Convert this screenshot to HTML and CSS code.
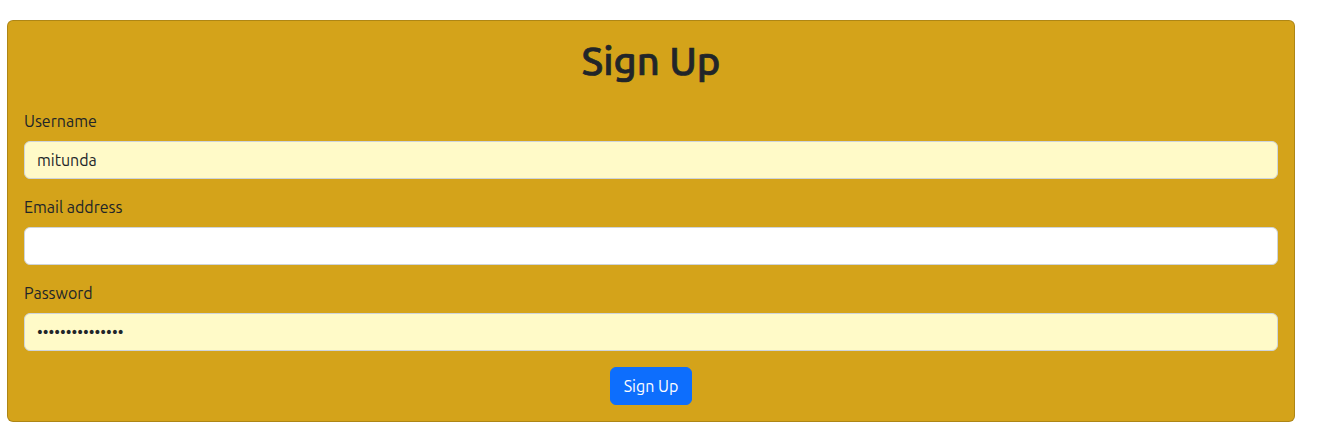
FILE: index.html
```html
<!DOCTYPE html>
<html lang="en">
<head>
<meta charset="utf-8">
<title>Sign Up</title>
<link rel="stylesheet" href="styles.css">
</head>
<body>
<div class="page">
  <form class="card">
    <h1 class="title">Sign Up</h1>
    <div class="field">
      <label class="label" for="username">Username</label>
      <input class="input autofilled" id="username" type="text" value="mitunda">
    </div>
    <div class="field">
      <label class="label" for="email">Email address</label>
      <input class="input" id="email" type="email">
    </div>
    <div class="field">
      <label class="label" for="password">Password</label>
      <input class="input autofilled" id="password" type="password" value="abcdefghijklmno">
    </div>
    <div class="actions">
      <button class="btn" type="button">Sign Up</button>
    </div>
  </form>
</div>
</body>
</html>
```

FILE: styles.css
```css
* { box-sizing: border-box; }
html, body { margin: 0; padding: 0; background: #fff; }
body {
  font-family: "Ubuntu", "Open Sans", "Noto Sans", sans-serif;
  font-size: 16px;
  line-height: 1.5;
  color: #212529;
}
.page {
  padding: 20px 27px 0 7px;
}
.card {
  background: #d4a31a;
  border: 1px solid rgba(0,0,0,.175);
  border-radius: 6px;
  padding: 16px;
}
.title {
  margin: 0 0 24px;
  font-size: 40px;
  font-weight: 500;
  line-height: 1.2;
  text-align: center;
  -webkit-text-stroke: 0.7px currentColor;
}
.field { margin-bottom: 16px; }
.label {
  display: block;
  margin-bottom: 8px;
}
.input {
  display: block;
  width: 100%;
  height: 38px;
  padding: 6px 12px;
  font: inherit;
  color: #212529;
  background: #fff;
  border: 1px solid #ced4da;
  border-radius: 6px;
  outline: none;
}
.input.autofilled { background: #fffac8; }
.actions { text-align: center; }
.btn {
  display: inline-block;
  height: 38px;
  padding: 6px 13px;
  font: inherit;
  color: #fff;
  background: #0d6efd;
  border: 1px solid #0d6efd;
  border-radius: 6px;
  cursor: pointer;
}
```
